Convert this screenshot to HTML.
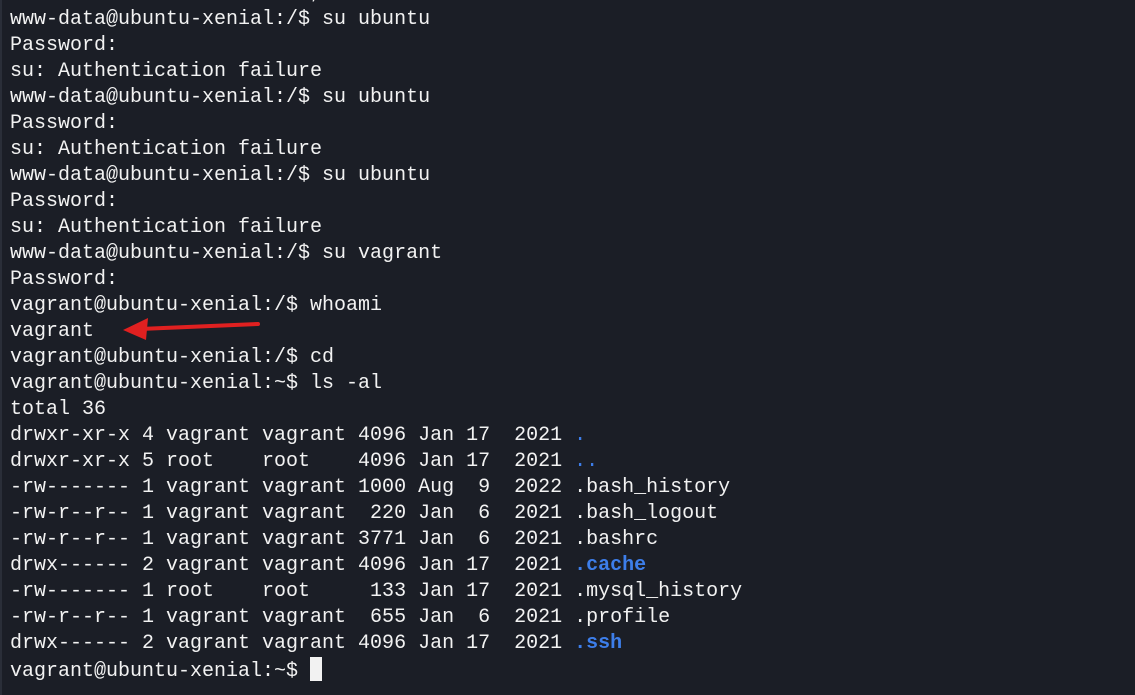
<!DOCTYPE html>
<html><head><meta charset="utf-8"><style>
html,body{margin:0;padding:0;width:1135px;height:695px;overflow:hidden;background:#1b1e26;}
pre{position:absolute;left:10px;top:-19px;margin:0;font-family:"Liberation Mono",monospace;font-size:20px;line-height:26px;color:#f2f2f2;letter-spacing:0;}
.b{color:#3d7eea;}
.bb{color:#3d7eea;font-weight:bold;}
.cur{display:inline-block;width:12px;height:24px;background:#f2f2f2;vertical-align:-5px;}
.edge{position:absolute;left:0;top:0;width:2px;height:695px;background:#2a2e38;}
</style></head><body>
<div class="edge"></div>
<pre>                         ,
www-data@ubuntu-xenial:/$ su ubuntu
Password:
su: Authentication failure
www-data@ubuntu-xenial:/$ su ubuntu
Password:
su: Authentication failure
www-data@ubuntu-xenial:/$ su ubuntu
Password:
su: Authentication failure
www-data@ubuntu-xenial:/$ su vagrant
Password:
vagrant@ubuntu-xenial:/$ whoami
vagrant
vagrant@ubuntu-xenial:/$ cd
vagrant@ubuntu-xenial:~$ ls -al
total 36
drwxr-xr-x 4 vagrant vagrant 4096 Jan 17  2021 <span class="b">.</span>
drwxr-xr-x 5 root    root    4096 Jan 17  2021 <span class="b">..</span>
-rw------- 1 vagrant vagrant 1000 Aug  9  2022 .bash_history
-rw-r--r-- 1 vagrant vagrant  220 Jan  6  2021 .bash_logout
-rw-r--r-- 1 vagrant vagrant 3771 Jan  6  2021 .bashrc
drwx------ 2 vagrant vagrant 4096 Jan 17  2021 <span class="bb">.cache</span>
-rw------- 1 root    root     133 Jan 17  2021 .mysql_history
-rw-r--r-- 1 vagrant vagrant  655 Jan  6  2021 .profile
drwx------ 2 vagrant vagrant 4096 Jan 17  2021 <span class="bb">.ssh</span>
vagrant@ubuntu-xenial:~$ <span class="cur"></span></pre>
<svg style="position:absolute;left:0;top:0" width="1135" height="695">
<line x1="258" y1="324" x2="140" y2="329" stroke="#e02020" stroke-width="4" stroke-linecap="round"/>
<polygon points="123,330 148,318 146,340" fill="#e02020"/>
</svg>
</body></html>
